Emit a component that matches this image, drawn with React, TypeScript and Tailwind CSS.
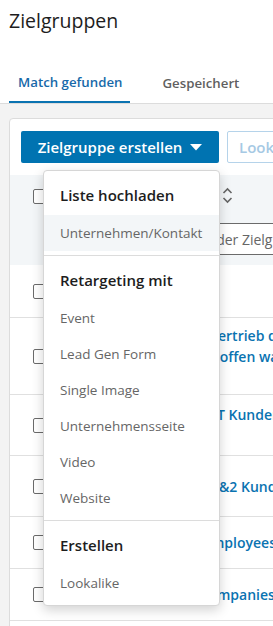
import React from 'react';

const menuSections: Array<{ title: string; items: string[] }> = [
  { title: 'Liste hochladen', items: ['Unternehmen/Kontakt'] },
  {
    title: 'Retargeting mit',
    items: ['Event', 'Lead Gen Form', 'Single Image', 'Unternehmensseite', 'Video', 'Website'],
  },
  { title: 'Erstellen', items: ['Lookalike'] },
];

// each line: text before the fold of the name column + text after it
type Line = { pre: string; post: string; w: string };

const rows: Array<{ lines: Line[]; h: string }> = [
  { lines: [{ pre: 'Test', post: '', w: 'w-[120px]' }], h: 'h-[53px]' },
  {
    lines: [
      { pre: 'Kontakte aus dem V', post: 'ertrieb die noch', w: 'w-[152px]' },
      { pre: 'Opportunities, die', post: ' offen waren', w: 'w-[150px]' },
      { pre: 'Q3', post: '', w: 'w-[120px]' },
    ],
    h: 'h-[77px]',
  },
  {
    lines: [
      { pre: 'Bestandskunden I', post: 'T Kunden DACH', w: 'w-[151px]' },
      { pre: 'Q4', post: '', w: 'w-[120px]' },
    ],
    h: 'h-[61px]',
  },
  { lines: [{ pre: 'Tier 1', post: '&2 Kunden', w: 'w-[153px]' }], h: 'h-[61px]' },
  { lines: [{ pre: 'Company E', post: 'mployees', w: 'w-[145px]' }], h: 'h-[52px]' },
  { lines: [{ pre: 'Target Co', post: 'mpanies', w: 'w-[151px]' }], h: 'h-[52px]' },
  { lines: [{ pre: 'Newsletter', post: '', w: 'w-[120px]' }], h: 'h-[52px]' },
];

const Checkbox = () => (
  <span className="block w-[15px] h-[15px] rounded-[2px] border border-[#6b6b6b] bg-white" />
);

const SortIcon = () => (
  <svg width="11" height="17" viewBox="0 0 11 17" fill="none" stroke="#666" strokeWidth="1.6">
    <polyline points="1.5,6 5.5,2 9.5,6" />
    <polyline points="1.5,11 5.5,15 9.5,11" />
  </svg>
);

export default function App() {
  return (
    <div className="relative w-[273px] h-[626px] overflow-hidden bg-[#f3f3f3] font-['Open_Sans','Noto_Sans',sans-serif]">
      {/* Page header */}
      <div className="bg-white">
        <h1 className="px-[9px] pt-[7px] text-[19.5px] leading-[28px] font-medium text-[#1d1d1d]">
          Zielgruppen
        </h1>
        <div className="flex mt-[25px] px-[9px] border-b border-[#dcdcdc]">
          <button className="pt-[12px] pb-[9px] pl-[9px] pr-[8px] text-[13.25px] leading-[20px] font-semibold text-[#1769a9] border-b-2 border-[#0a73b1]">
            Match gefunden
          </button>
          <button className="ml-[23px] pt-[12px] pb-[9px] px-[9px] text-[13.25px] leading-[20px] font-semibold text-[#5f5f5f]">
            Gespeichert
          </button>
        </div>
      </div>

      {/* Card */}
      <div className="mt-[14px] pl-[9px]">
        <div className="w-[600px] bg-white border border-[#dcdcdc] rounded-[4px]">
          <div className="flex gap-[8px] pl-[11px] py-[12px]">
            <button className="flex items-center justify-center gap-[8px] w-[198px] h-[32px] rounded-[2px] bg-[#0073b1] text-white text-[15px] font-semibold">
              Zielgruppe erstellen
              <svg width="12" height="7" viewBox="0 0 12 7">
                <path d="M0 0 L12 0 L6 6.5 Z" fill="#fff" />
              </svg>
            </button>
            <button className="h-[32px] px-[11px] rounded-[2px] border border-[#b5d3ea] text-[#a6c9e4] text-[15px] font-semibold whitespace-nowrap">
              Lookalike erstellen
            </button>
          </div>

          {/* Table header */}
          <div className="flex bg-[#f3f6f8] h-[90px]">
            <div className="w-[56px] pl-[23px] pt-[14px]">
              <Checkbox />
            </div>
            <div className="flex-1 pt-[10px]">
              <div className="flex items-center h-[20px] gap-[6px]">
                <span className="w-[150px] text-[14px] font-semibold text-[#5f5f5f]">Name</span>
                <SortIcon />
              </div>
              <div className="mt-[18px] h-[32px] w-[400px] border border-[#6b6b6b] bg-white flex items-center pl-[28px] text-[14px] text-[#666] whitespace-nowrap">
                Suche nach Name der Zielgruppe
              </div>
            </div>
          </div>

          {/* Rows */}
          {rows.map((row, i) => (
            <div key={i} className={`flex items-center border-b border-[#e0e0e0] ${row.h}`}>
              <div className="w-[56px] pl-[23px]">
                <Checkbox />
              </div>
              <div className="flex-1 text-[14px] leading-[21px] font-semibold text-[#0a73b1] whitespace-nowrap">
                {row.lines.map((l, j) => (
                  <div key={j}>
                    <span className={`inline-block overflow-hidden text-right align-top ${l.w}`}>{l.pre}</span>
                    {l.post}
                  </div>
                ))}
              </div>
            </div>
          ))}
        </div>
      </div>

      {/* Dropdown menu */}
      <div className="absolute left-[43px] top-[170px] w-[177px] bg-white border border-[#d6d6d6] rounded-[4px] shadow-[0_4px_12px_rgba(0,0,0,0.18)]">
        {menuSections.map((section, i) => (
          <div key={section.title} className={`py-[4px] ${i > 0 ? 'border-t border-[#dcdcdc]' : ''}`}>
            <div className="h-[40px] flex items-center pl-[16px] text-[15px] font-semibold text-[#1d1d1d]">
              {section.title}
            </div>
            {section.items.map((item) => (
              <div
                key={item}
                className={`h-[36px] flex items-center pl-[16px] text-[13.5px] text-[#666] ${
                  item === 'Unternehmen/Kontakt' ? 'bg-[#f3f6f8]' : ''
                }`}
              >
                {item}
              </div>
            ))}
          </div>
        ))}
      </div>
    </div>
  );
}
